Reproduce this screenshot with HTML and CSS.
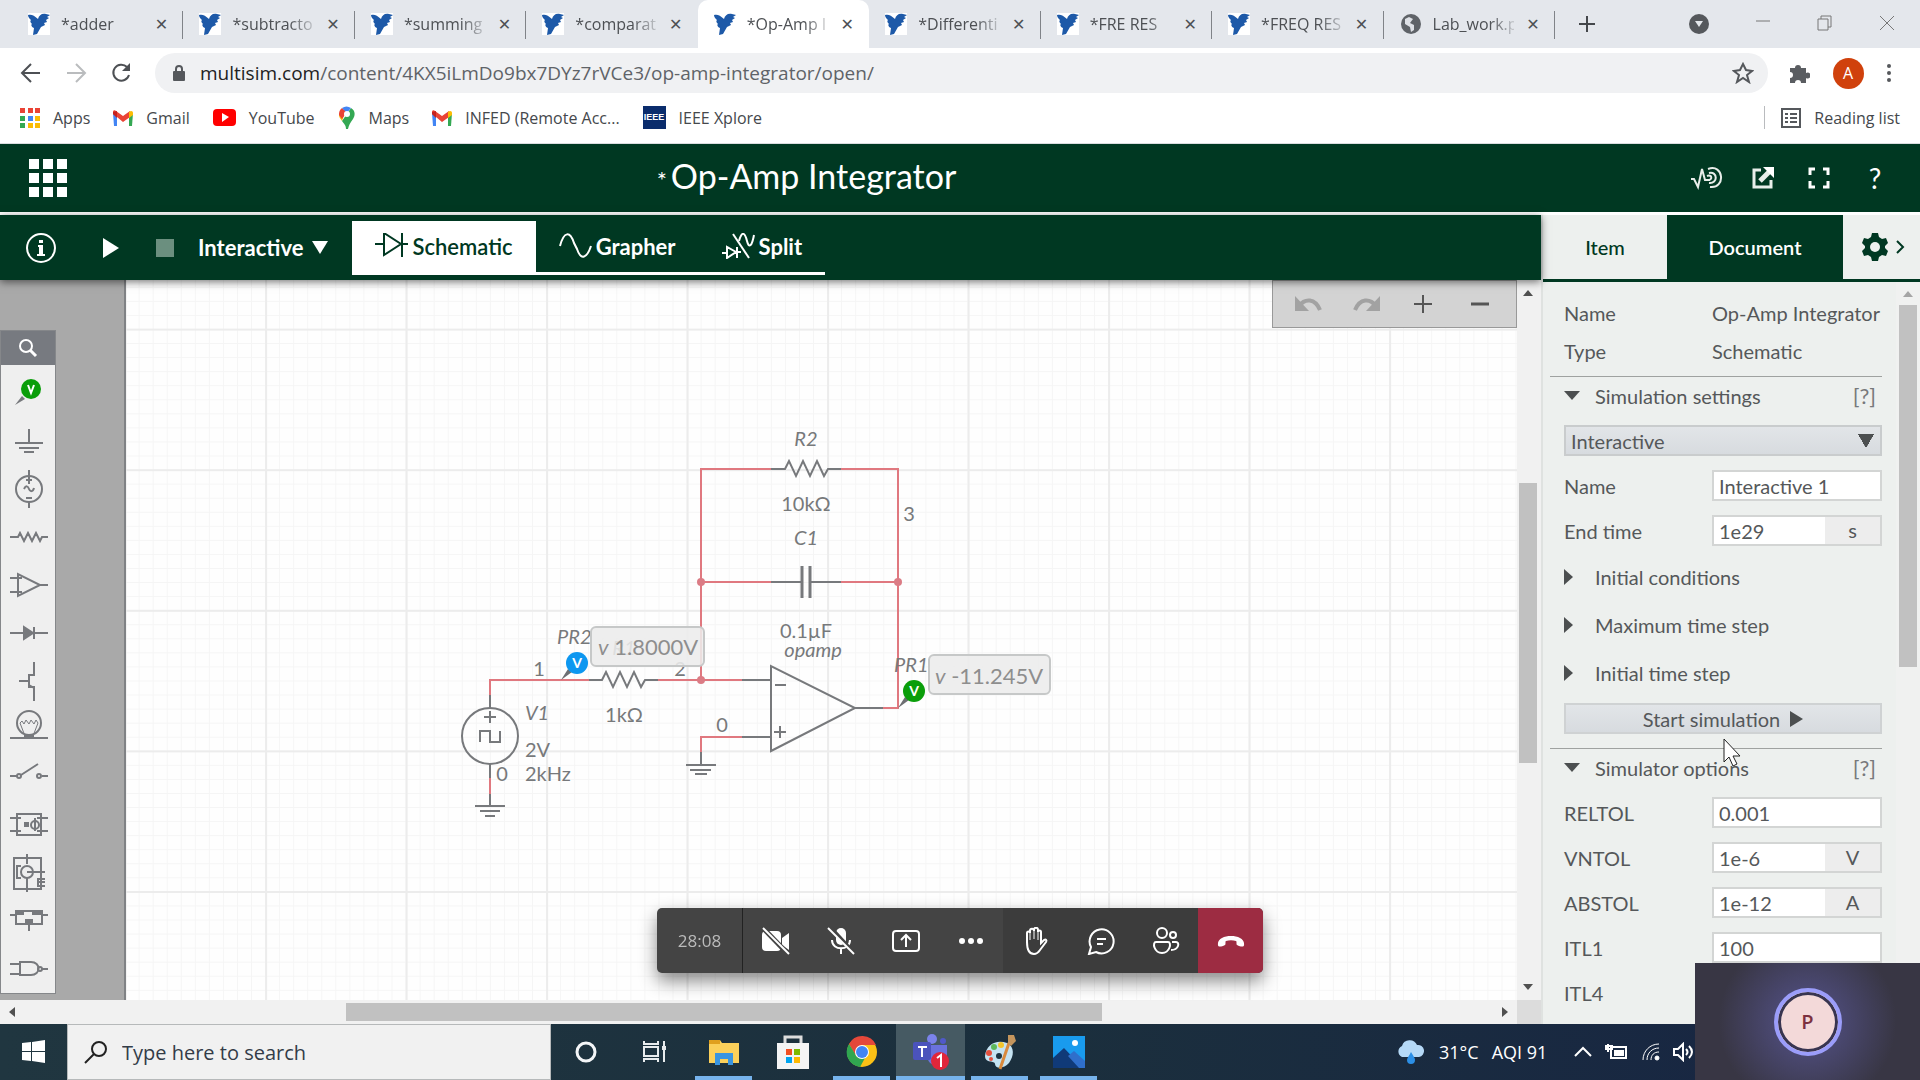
FILE: index.html
```html
<!DOCTYPE html>
<html lang="en">
<head>
<meta charset="utf-8">
<title>Op-Amp Integrator</title>
<link rel="stylesheet" href="styles.css">
</head>
<body>
<svg class="defs" aria-hidden="true">
  <symbol id="bird" viewBox="0 0 22 22"><path fill="#fff" d="M0 0h22v22H0z"/><path fill="#1d59a8" d="M0 2c3-1 6 0 10 4 1-4 4-6 8-5l4 1-3 2 2 1-3 2 1 2-3 1 1 2-4 2-4 7-4 1 1-7C3 14 3 11 4 11 2 9 2 8 3 7 1 5 0 4 0 2z"/></symbol>
  <symbol id="mail" viewBox="0 0 20 16"><path fill="#4285f4" d="M0 3h4v13H1z"/><path fill="#34a853" d="M16 3h4l-1 13h-3z"/><path fill="#ea4335" d="M0 4V2c0-2 2-2 3-1l7 5 7-5v6l-7 5-6-5z"/><path fill="#fbbc04" d="M16 2c2-2 4-1 4 1v2l-4 3z"/><path fill="#c5221f" d="M0 4V2l4-1v7z"/></symbol>
</svg>

<header class="browser">
  <div class="tabstrip">
    <div class="tabs">
      <div class="tab"><svg class="fav"><use href="#bird"/></svg><span class="tab-title">*adder</span><button class="x" aria-label="Close">✕</button></div>
      <div class="tab"><svg class="fav"><use href="#bird"/></svg><span class="tab-title">*subtracto</span><button class="x" aria-label="Close">✕</button></div>
      <div class="tab"><svg class="fav"><use href="#bird"/></svg><span class="tab-title">*summing</span><button class="x" aria-label="Close">✕</button></div>
      <div class="tab no-line"><svg class="fav"><use href="#bird"/></svg><span class="tab-title">*comparat</span><button class="x" aria-label="Close">✕</button></div>
      <div class="tab active"><svg class="fav"><use href="#bird"/></svg><span class="tab-title">*Op-Amp I</span><button class="x" aria-label="Close">✕</button></div>
      <div class="tab"><svg class="fav"><use href="#bird"/></svg><span class="tab-title">*Differenti</span><button class="x" aria-label="Close">✕</button></div>
      <div class="tab"><svg class="fav"><use href="#bird"/></svg><span class="tab-title">*FRE RES</span><button class="x" aria-label="Close">✕</button></div>
      <div class="tab"><svg class="fav"><use href="#bird"/></svg><span class="tab-title">*FREQ RES</span><button class="x" aria-label="Close">✕</button></div>
      <div class="tab"><svg class="fav" viewBox="0 0 22 22"><circle cx="11" cy="11" r="10" fill="#5f6368"/><path d="M5 6l4-2 4 2-3 4 4 2v5l-3 2-1-5-5-3z" fill="#dee1e6"/></svg><span class="tab-title">Lab_work.p</span><button class="x" aria-label="Close">✕</button></div>
    </div>
    <button class="newtab" aria-label="New tab"><svg width="18" height="18"><path d="M9 1v16M1 9h16" stroke="#44474b" stroke-width="2"/></svg></button>
    <div class="wincontrols">
      <button aria-label="Search tabs"><svg width="22" height="22"><circle cx="11" cy="11" r="10" fill="#55585c"/><path d="M7 8h8l-4 6z" fill="#e4e7eb"/></svg></button>
      <button aria-label="Minimize"><svg width="18" height="18"><path d="M2 6h14" stroke="#777" stroke-width="1"/></svg></button>
      <button aria-label="Restore"><svg width="18" height="18"><path d="M2 4h10v11H2zM5 4V1h10v11h-3" fill="none" stroke="#777"/></svg></button>
      <button aria-label="Close window"><svg width="18" height="18"><path d="M2 1l14 14M16 1L2 15" stroke="#777"/></svg></button>
    </div>
  </div>
  <div class="navbar">
    <button class="nav" aria-label="Back"><svg width="22" height="22" fill="none" stroke="#4d5054" stroke-width="2"><path d="M20 11H3M11 2l-9 9 9 9"/></svg></button>
    <button class="nav" aria-label="Forward"><svg width="22" height="22" fill="none" stroke="#babcbe" stroke-width="2"><path d="M2 11h17M11 2l9 9-9 9"/></svg></button>
    <button class="nav" aria-label="Reload"><svg width="22" height="22" fill="none" stroke="#4d5054" stroke-width="2"><path d="M19 13a8 8 0 1 1-2-8"/><path d="M20 1v8h-8z" fill="#4d5054" stroke="none"/></svg></button>
    <label class="address">
      <svg width="14" height="18"><path d="M4 8V5a3 3 0 0 1 6 0v3" fill="none" stroke="#55585c" stroke-width="2"/><rect x="1" y="7" width="12" height="10" rx="1" fill="#55585c"/></svg>
      <span class="url"><b>multisim.com</b>/content/4KX5iLmDo9bx7DYz7rVCe3/op-amp-integrator/open/</span>
      <svg width="22" height="22"><path d="M11 2l3 6 6 1-5 4 2 7-6-4-6 4 2-7-5-4 6-1z" fill="none" stroke="#55585c" stroke-width="2"/></svg>
    </label>
    <div class="nav-right">
      <button aria-label="Extensions"><svg width="22" height="22"><path d="M2 6h5a3 3 0 1 1 6 0h5v5a3 3 0 1 1 0 5v5h-5a3 3 0 0 0-6 0H2v-5a3 3 0 0 0 0-6z" fill="#5a5d61"/></svg></button>
      <button class="profile">A</button>
      <button aria-label="Menu"><svg width="6" height="20" fill="#55585c"><circle cx="3" cy="3" r="2"/><circle cx="3" cy="10" r="2"/><circle cx="3" cy="17" r="2"/></svg></button>
    </div>
  </div>
  <nav class="bookmarks">
    <a href="#"><svg width="20" height="20"><path fill="#ea4335" d="M0 0h5v5H0zM8 0h5v5H8zM15 0h5v5h-5z"/><path fill="#34a853" d="M0 8h5v5H0zM0 15h5v5H0z"/><path fill="#4285f4" d="M8 8h5v5H8z"/><path fill="#fbbc04" d="M15 8h5v5h-5zM8 15h5v5H8zM15 15h5v5h-5z"/></svg>Apps</a>
    <a href="#"><svg width="20" height="16"><use href="#mail"/></svg>Gmail</a>
    <a href="#"><svg width="23" height="18"><rect width="23" height="17" rx="4" fill="#f00"/><path d="M9 4l7 4-7 5z" fill="#fff"/></svg>YouTube</a>
    <a href="#"><svg width="18" height="24"><path d="M1 9l3-4 2 4-2 6C2 12 1 11 1 9z" fill="#fbbc04"/><path d="M13 2c5 3 4 8 2 11-3 4-4 6-5 10H8c0-4-2-5-4-8z" fill="#34a853"/><path d="M1 9a8 8 0 0 1 3-7l5 4-5 7z" fill="#ea4335"/><path d="M4 2a8 8 0 0 1 9 0L9 7z" fill="#4285f4"/><circle cx="9" cy="8" r="3" fill="#fff"/></svg>Maps</a>
    <a href="#"><svg width="20" height="16"><use href="#mail"/></svg>INFED (Remote Acc...</a>
    <a href="#"><span class="ieee">IEEE</span>IEEE Xplore</a>
    <a href="#" class="reading"><svg width="20" height="20" fill="none" stroke="#55585c" stroke-width="2"><path d="M1 1h18v18H1zM4 6h3M9 6h7M4 10h3M9 10h7M4 14h3M9 14h7"/></svg>Reading list</a>
  </nav>
</header>

<div class="app-header">
  <button class="waffle" aria-label="Apps"><svg width="38" height="38" fill="#fff"><path d="M0 0h10v10H0zM14 0h10v10H14zM28 0h10v10H28zM0 14h10v10H0zM14 14h10v10H14zM28 14h10v10H28zM0 28h10v10H0zM14 28h10v10H14zM28 28h10v10H28z"/></svg></button>
  <h1><span class="star">*</span>Op-Amp Integrator</h1>
  <div class="app-actions">
    <button aria-label="Formula"><svg width="32" height="24" fill="none" stroke="#e8eeea" stroke-width="2"><path d="M0 13h3l4 8 4-18 3 11h5"/><path d="M17 3c16-6 18 20 2 18"/><path d="M18 7c9-2 9 11 0 10M16 10c5-2 6 4 1 4"/></svg></button>
    <button aria-label="Share"><svg width="24" height="24" fill="none" stroke="#e8eeea" stroke-width="3"><path d="M10 4H3v17h17v-7"/><path d="M9 15L19 5" stroke-width="5"/><path d="M12 1h11v11z" fill="#fff" stroke="none"/></svg></button>
    <button aria-label="Full screen"><svg width="22" height="22" fill="none" stroke="#fff" stroke-width="3"><path d="M2 8V2h5M15 2h5v6M20 14v6h-5M7 20H2v-6"/></svg></button>
    <button class="help" aria-label="Help">?</button>
  </div>
</div>

<main class="app">
  <section class="left">
    <div class="toolbar">
      <button class="t-icon info" aria-label="Info"><svg width="32" height="32"><circle cx="16" cy="16" r="14" fill="none" stroke="#fff" stroke-width="2"/><path d="M14 8h4v3h-4zM13 13h5v9h2v2h-8v-2h2v-7h-1z" fill="#fff"/></svg></button>
      <button class="t-icon play" aria-label="Run"><svg width="16" height="20"><path d="M0 0l16 10L0 20z" fill="#fff"/></svg></button>
      <button class="t-icon stop" aria-label="Stop"><svg width="18" height="18"><path d="M0 0h18v18H0z" fill="#6b8f7f"/></svg></button>
      <button class="mode">Interactive<svg width="16" height="13"><path d="M0 0h16L8 13z" fill="#fff"/></svg></button>
      <div class="views">
        <button class="view on"><svg width="34" height="26" fill="none" stroke="#003822" stroke-width="2"><path d="M0 11h9M9 0v22l17-11zM27 0v24M27 11h6"/></svg>Schematic</button>
        <button class="view"><svg width="34" height="26" fill="none" stroke="#fff" stroke-width="2"><path d="M1 13C5-2 11-2 15 10l3 6c4 12 10 9 14-3"/></svg>Grapher</button>
        <button class="view"><svg width="34" height="26" fill="none" stroke="#fff" stroke-width="2"><path d="M11 1l16 24"/><path d="M0 20h5M5 14v11l9-6zM15 14v11M15 19h4M17 8c3-11 6-8 8 0s5 5 7-6" /></svg>Split</button>
      </div>
    </div>

    <div class="workspace">
      <div class="stage">
        <svg class="canvas">
          <defs>
            <pattern id="minor" x="124.6" y="330" width="14.05" height="14.06" patternUnits="userSpaceOnUse"><path d="M0 0.5H15M0.5 0V15" stroke="#f5f5f5" fill="none"/></pattern>
            <pattern id="major" x="124.6" y="329.6" width="140.5" height="140.6" patternUnits="userSpaceOnUse"><path d="M0 1H141M1 0V141" stroke="#ececec" stroke-width="2" fill="none"/></pattern>
          </defs>
          <rect width="100%" height="100%" fill="#fefefe"/>
          <g transform="translate(0 -281)">
            <rect width="100%" height="2000" fill="url(#minor)"/>
            <rect width="100%" height="2000" fill="url(#major)"/>
            <rect y="281" width="125" height="2000" fill="#a9a9a9"/>
            <rect x="124" y="281" width="2" height="2000" fill="#808285"/>
            <g class="wire">
              <path d="M771 470H701V681M841 470H898V709H883M701 583H771M841 583H898M490 696V681H589M658 681H742M742 738H701V753M490 779V795"/>
              <circle cx="701" cy="583" r="4"/><circle cx="701" cy="681" r="4"/><circle cx="898" cy="583" r="4"/>
            </g>
            <g class="part">
              <path d="M771 470H785l4-8 7 15 7-15 7 15 7-15 7 15 4-7H841"/>
              <path d="M771 583H802M811 583H841"/><path d="M802 567V599M810 567V599" stroke-width="3"/>
              <path d="M589 681H602l4-8 7 15 7-15 7 15 7-15 7 15 4-7H658"/>
              <path d="M771 667V752L855 709zM742 681H771M742 738H771M855 709H883M775 686H786M774 733H786M780 727V739"/>
              <path d="M701 753V766M686 766H716M690 771H711M695 775H707"/>
              <circle cx="490" cy="737" r="28"/>
              <path d="M490 696V709M490 765V779M484 718H496M490 712V724M480 743V732H490V743H500V732"/>
              <path d="M490 795V807M475 807H505M480 812H500M485 817H495"/>
            </g>
            <g class="lbl">
              <text class="it mid" x="806" y="447">R2</text>
              <text class="mid" x="806" y="512">10kΩ</text>
              <text class="mid" x="909" y="522">3</text>
              <text class="it mid" x="806" y="546">C1</text>
              <text class="mid" x="806" y="639">0.1µF</text>
              <text class="it mid" x="813" y="658">opamp</text>
              <text class="mid" x="539" y="677">1</text>
              <text class="mid" x="680" y="677">2</text>
              <text class="mid" x="502" y="782">0</text>
              <text class="mid" x="722" y="733">0</text>
              <text class="it" x="525" y="721">V1</text>
              <text x="525" y="758">2V</text>
              <text x="525" y="782">2kHz</text>
              <text class="mid" x="624" y="723">1kΩ</text>
              <text class="it" x="557" y="645">PR2</text>
              <text class="it mid" x="624" y="656">R1</text>
              <text class="it" x="894" y="673">PR1</text>
            </g>
            <g class="readout">
              <rect x="591" y="628" width="113" height="39" rx="5"/>
              <text x="598" y="656"><tspan font-style="italic">v</tspan> 1.8000V</text>
              <rect x="929" y="656" width="121" height="39" rx="5"/>
              <text x="935" y="685"><tspan font-style="italic">v</tspan> -11.245V</text>
            </g>
            <g class="probe">
              <path d="M561 681l7-11 4 3z"/><circle cx="577" cy="664" r="11" fill="#0d97f0"/><text x="577" y="669">V</text>
              <path d="M898 709l7-11 4 3z"/><circle cx="914" cy="692" r="11" fill="#0a9e0a"/><text x="914" y="697">V</text>
            </g>
          </g>
        </svg>
        <div class="palette">
          <button class="p-search" aria-label="Search"><svg width="20" height="20" fill="none" stroke="#fff"><circle cx="8" cy="8" r="6" stroke-width="2"/><path d="M12 12l6 6" stroke-width="3"/></svg></button>
          <button aria-label="Probe"><svg width="54" height="48"><path d="M14 36l7-9 3 3z" fill="#77797d" stroke="none"/><circle cx="30" cy="20" r="10" fill="#0a9e0a" stroke="none"/><path d="M27 16l3 8 3-8" stroke="#fff"/></svg></button>
          <button aria-label="Ground"><svg width="54" height="48"><path d="M28 12v14M14 26h28M18 31h20M23 35h10"/></svg></button>
          <button aria-label="Source"><svg width="54" height="48"><circle cx="28" cy="24" r="13"/><path d="M28 5v14M28 37v6M25 15h6M25 33h6M23 24c2-4 4-3 5 0s4 3 5-1"/></svg></button>
          <button aria-label="Resistor"><svg width="54" height="48"><path d="M9 24h8l2-4 4 8 4-8 4 8 4-8 4 8 2-4h6"/></svg></button>
          <button aria-label="Op-amp"><svg width="54" height="48"><path d="M17 13v22l22-11zM9 17h12M9 31h12M39 24h8"/></svg></button>
          <button aria-label="Diode"><svg width="54" height="48"><path d="M9 24h38M33 18v12"/><path d="M23 18v12l9-6z" fill="#77797d"/></svg></button>
          <button aria-label="Transistor"><svg width="54" height="48"><path d="M33 5v13h-5v12h5v14M18 24h10M28 28l5 3"/></svg></button>
          <button aria-label="Lamp"><svg width="54" height="48"><circle cx="28" cy="18" r="12"/><path d="M9 33h38M24 31L19 18l2-2 2 3 2-4 3 4 2-4 3 4 2-4 2 3-5 13" stroke-width="1"/><path d="M9 33h38"/><path d="M24 30h8v3h-8z" fill="#77797d"/></svg></button>
          <button aria-label="Switch"><svg width="54" height="48"><path d="M9 23h7M20 22l17-11M41 23h6"/><circle cx="18" cy="23" r="2"/><circle cx="38" cy="23" r="2"/></svg></button>
          <button aria-label="Two-port"><svg width="54" height="48"><path d="M16 13h24v21H16zM9 17h11M9 30h11M36 17h11M36 30h11M34 17v13"/><circle cx="34" cy="24" r="4"/><path d="M24 22h3v3h-3z" fill="#77797d"/></svg></button>
          <button aria-label="Machine"><svg width="54" height="48"><path d="M13 9h27v31H13zM26 5v10M26 29v14M26 23h18M20 17h-4v12h4"/><circle cx="26" cy="23" r="6"/><path d="M36 30h8M36 33h8M36 37h8M37 30v7"/></svg></button>
          <button aria-label="Connector"><svg width="54" height="48"><path d="M15 14h26v13H15zM9 18h6M41 18h6M28 27v7"/><path d="M17 15h5v2h-5zM32 15h7v2h-7zM25 23h6v2h-6z" fill="#77797d"/></svg></button>
          <button aria-label="Logic gate"><svg width="54" height="48"><path d="M19 17h11c10 0 10 13 0 13H19zM9 19h10M9 29h10M41 24h6"/><circle cx="39" cy="24" r="2"/></svg></button>
        </div>
        <div class="zoomtools">
          <button aria-label="Undo"><svg width="30" height="20"><path d="M5 12c6-8 16-8 21 4" fill="none" stroke="#a2a2a2" stroke-width="4"/><path d="M1 2v15h14z" fill="#a2a2a2"/></svg></button>
          <button aria-label="Redo"><svg width="30" height="20"><path d="M25 12C19 4 9 4 4 16" fill="none" stroke="#a2a2a2" stroke-width="4"/><path d="M29 2v15H15z" fill="#a2a2a2"/></svg></button>
          <button aria-label="Zoom in"><svg width="20" height="20"><path d="M10 1v18M1 10h18" stroke="#555" stroke-width="2"/></svg></button>
          <button aria-label="Zoom out"><svg width="20" height="20"><path d="M1 10h18" stroke="#555" stroke-width="3"/></svg></button>
        </div>
      </div>
      <div class="vbar"><i class="up"></i><i class="vthumb"></i><i class="down"></i></div>
      <div class="hbar"><i class="lft"></i><i class="hthumb"></i><i class="rgt"></i></div>
      <div class="corner"></div>
    </div>
  </section>

  <aside class="panel">
    <div class="panel-tabs">
      <button class="item">Item</button>
      <button class="doc">Document</button>
      <button class="gear" aria-label="Settings"><svg width="26" height="28"><path d="M10 0h6l1 4 3 2 4-1 2 5-3 3v2l3 3-2 5-4-1-3 2-1 4h-6l-1-4-3-2-4 1-2-5 3-3v-2L0 10l2-5 4 1 3-2z" fill="#003822"/><circle cx="13" cy="14" r="5" fill="#edf0ee"/></svg><svg width="10" height="16"><path d="M1 2l6 6-6 6" fill="none" stroke="#003822" stroke-width="2"/></svg></button>
    </div>
    <div class="panel-scroll">
      <form class="form">
        <div class="row text"><span>Name</span><span>Op-Amp Integrator</span></div>
        <div class="row text"><span>Type</span><span>Schematic</span></div>
        <section class="group">
          <h2><i class="open"></i>Simulation settings<a href="#">[?]</a></h2>
          <div class="row full"><select aria-label="Simulation type"><option>Interactive</option></select></div>
          <div class="row"><label for="nm">Name</label><span class="field"><input id="nm" value="Interactive 1"></span></div>
          <div class="row"><label for="et">End time</label><span class="field"><input id="et" value="1e29"><em>s</em></span></div>
          <h3><i class="closed"></i>Initial conditions</h3>
          <h3><i class="closed"></i>Maximum time step</h3>
          <h3><i class="closed"></i>Initial time step</h3>
          <div class="row full"><button type="button" class="start">Start simulation<i class="closed"></i></button></div>
        </section>
        <section class="group">
          <h2><i class="open"></i>Simulator options<a href="#">[?]</a></h2>
          <div class="row"><label for="rt">RELTOL</label><span class="field"><input id="rt" value="0.001"></span></div>
          <div class="row"><label for="vt">VNTOL</label><span class="field"><input id="vt" value="1e-6"><em>V</em></span></div>
          <div class="row"><label for="at">ABSTOL</label><span class="field"><input id="at" value="1e-12"><em>A</em></span></div>
          <div class="row"><label for="i1">ITL1</label><span class="field"><input id="i1" value="100"></span></div>
          <div class="row"><span>ITL4</span></div>
        </section>
      </form>
      <div class="pbar"><i class="up"></i><i class="pthumb"></i></div>
    </div>
  </aside>
</main>

<footer class="taskbar">
  <button class="winstart" aria-label="Start"><svg width="24" height="24" fill="#fff"><path d="M0 3l9-1v9H0zM10 2l13-2v11H10zM0 12h9v9l-9-1zM10 12h13v11l-13-2z"/></svg></button>
  <label class="tsearch"><svg width="24" height="24" fill="none" stroke="#222" stroke-width="2"><circle cx="15" cy="9" r="7"/><path d="M10 14L1 23"/></svg><input type="text" placeholder="Type here to search" aria-label="Search"></label>
  <div class="apps">
    <button aria-label="Cortana"><svg width="24" height="24"><circle cx="12" cy="12" r="9" fill="none" stroke="#f4f6f8" stroke-width="3"/></svg></button>
    <button aria-label="Task view"><svg width="26" height="24" fill="none" stroke="#e8ecee" stroke-width="2"><path d="M2 7h14v9H2zM2 1v3h14V1M2 22v-3h14v3M22 1v21"/><path d="M20 6h4v4h-4z" fill="#e8ecee" stroke="none"/></svg></button>
    <button class="run" aria-label="File Explorer"><svg width="32" height="34"><path d="M1 5h11l2 3h17v20H1z" fill="#fbd05a"/><path d="M1 5h11v4H1z" fill="#e0a01e"/><path d="M7 18h18v12h-5v-6h-8v6H7z" fill="#3a95e0"/></svg></button>
    <button aria-label="Store"><svg width="34" height="36"><path d="M9 12V3h16v9" fill="none" stroke="#ddd" stroke-width="3"/><path d="M1 9h32v26H1z" fill="#f4f4f4"/><path fill="#f25022" d="M10 15h6v6h-6z"/><path fill="#7fba00" d="M18 15h6v6h-6z"/><path fill="#00a4ef" d="M10 23h6v6h-6z"/><path fill="#ffb900" d="M18 23h6v6h-6z"/></svg></button>
    <button class="run" aria-label="Chrome"><svg width="32" height="32"><circle cx="16" cy="16" r="15" fill="#fbc116"/><path d="M3 8A15 15 0 0 1 30 9H16l-6 11z" fill="#e5483a"/><path d="M3 8l8 13 8 1-5 9A15 15 0 0 1 3 8z" fill="#30a650"/><circle cx="16" cy="16" r="7" fill="#fff"/><circle cx="16" cy="16" r="6" fill="#4285f4"/></svg></button>
    <button class="run current" aria-label="Teams"><svg width="36" height="38"><circle cx="19" cy="6" r="5" fill="#7b83eb"/><circle cx="30" cy="8" r="3" fill="#5059c9"/><path d="M14 12h20v10c0 14-20 14-20 0z" fill="#6a72dc"/><rect y="9" width="18" height="18" rx="2" fill="#4b53bc"/><path d="M5 14h9M9 14v10" stroke="#fff" stroke-width="2"/><circle cx="27" cy="28" r="9" fill="#e0263a"/><path d="M24 25l4-3v12" fill="none" stroke="#fff" stroke-width="2"/></svg></button>
    <button class="run" aria-label="Paint"><svg width="34" height="36"><path d="M2 22C3 10 14 5 24 9c8 4 7 13 2 20-5 6-14 6-14 1 0-4-10 0-10-8z" fill="#c5e3f2"/><circle cx="6" cy="19" r="3" fill="#e5503e"/><circle cx="11" cy="13" r="3" fill="#5db85c"/><circle cx="18" cy="11" r="3" fill="#f3c52c"/><circle cx="8" cy="25" r="2" fill="#e5503e"/><circle cx="16" cy="22" r="3" fill="#1d3442"/><path d="M26 9L17 35" stroke="#d98a3d" stroke-width="3"/><path d="M25 1h6l2 6-5 5-3-3z" fill="#c4955d"/></svg></button>
    <button class="run" aria-label="Photos"><svg width="32" height="32"><path d="M0 0h32v32H0z" fill="#199bee"/><path d="M0 22l11-10 19 20H0z" fill="#103a78"/><path d="M15 20l6-5 11 10v7H26z" fill="#2f6fcb"/><circle cx="22" cy="7" r="3" fill="#fff"/></svg></button>
  </div>
  <div class="tray">
    <svg width="30" height="26"><path d="M6 18a6 6 0 0 1 0-11 8 8 0 0 1 15-1 6 6 0 0 1 2 12z" fill="#b5d9f7"/><path d="M15 13c3 5 4 6 4 8a4 4 0 0 1-8 0c0-2 2-4 4-8z" fill="#2c8fe6"/></svg>
    <span class="temp">31°C</span><span class="aqi">AQI 91</span>
    <svg width="18" height="12"><path d="M1 10l8-8 8 8" fill="none" stroke="#fff" stroke-width="2"/></svg>
    <svg width="24" height="18" fill="none" stroke="#fff" stroke-width="2"><path d="M6 4h15v11H6zM3 1v8M1 3h6v3H1z"/><path d="M9 7h10v6H9z" fill="#fff" stroke="none"/></svg>
    <svg width="18" height="18" fill="none" stroke="#fff" stroke-width="1"><path d="M1 17C1 8 8 1 17 1M5 17C5 10 10 5 17 5M9 17c0-5 3-8 8-8"/><circle cx="15" cy="15" r="2" fill="#fff"/></svg>
    <svg width="20" height="20" fill="none" stroke="#fff" stroke-width="2"><path d="M1 7h4l5-5v16l-5-5H1zM13 7c2 2 2 4 0 6M16 4c4 4 4 8 0 12"/></svg>
  </div>
</footer>

<div class="meeting">
  <span class="timer">28:08</span>
  <button aria-label="Camera off"><svg width="28" height="28"><rect y="4" width="19" height="20" rx="4" fill="#fff"/><path d="M20 11l7-5v17l-7-5z" fill="#fff"/><path d="M0 0l27 28" stroke="#444" stroke-width="5"/><path d="M1 1l26 26" stroke="#fff" stroke-width="2"/></svg></button>
  <button aria-label="Muted"><svg width="28" height="28"><rect x="9" y="1" width="10" height="17" rx="5" fill="#fff"/><path d="M5 13c0 11 18 11 18 0M14 21v6" fill="none" stroke="#fff" stroke-width="2"/><path d="M3 0l24 26" stroke="#444" stroke-width="4"/><path d="M1 1l26 26" stroke="#fff" stroke-width="2"/></svg></button>
  <button aria-label="Share"><svg width="28" height="28" fill="none" stroke="#fff" stroke-width="2"><rect x="1" y="4" width="26" height="20" rx="3"/><path d="M14 20V9M9 13l5-5 5 5"/></svg></button>
  <button aria-label="More"><svg width="28" height="28" fill="#fff"><circle cx="5" cy="14" r="3"/><circle cx="14" cy="14" r="3"/><circle cx="23" cy="14" r="3"/></svg></button>
  <button class="dark" aria-label="Raise hand"><svg width="28" height="28" fill="none" stroke="#fff" stroke-width="2"><path d="M5 15V6c0-2 3-2 3 0V4c0-3 4-3 4 0V3c0-3 4-3 4 0v2c0-2 3-2 3 0v11l3-3c2-1 3 0 2 2l-6 8c-2 3-3 4-6 4-5 0-7-4-7-12z"/><path d="M8 6v7M12 4v8M16 5v8" stroke-width="1"/></svg></button>
  <button class="dark" aria-label="Chat"><svg width="28" height="28" fill="none" stroke="#fff" stroke-width="2"><path d="M4 20A12 12 0 1 1 9 25l-7 2z"/><path d="M10 12h9M10 17h6"/></svg></button>
  <button class="dark" aria-label="People"><svg width="28" height="28" fill="none" stroke="#fff" stroke-width="2"><circle cx="10" cy="6" r="5"/><circle cx="21" cy="8" r="3"/><path d="M4 15h12c4 0 2 11-6 11S0 15 4 15zM20 15h4c4 0 3 8-5 8"/></svg></button>
  <button class="hang" aria-label="Leave"><svg width="28" height="28"><path d="M1 18C-1 6 29 6 27 18c0 2-3 2-7 0-1-1 0-4-1-4-3-1-7-1-10 0-1 0 0 3-1 4-4 2-7 2-7 0z" fill="#fff"/></svg></button>
</div>

<div class="pip"><span>P</span></div>

<svg class="pointer" width="20" height="30"><path d="M1 1v23l5-5 4 9 4-2-4-8h7z" fill="#fff" stroke="#222"/></svg>
</body>
</html>
```
FILE: styles.css
```css
* { box-sizing: border-box; }
body {
  margin: 0;
  min-height: 100vh;
  display: flex;
  flex-direction: column;
  font-family: Lato, "Liberation Sans", sans-serif;
  font-size: 20px;
  color: #55585a;
  background: #fff;
  overflow: hidden;
}
button { border: 0; padding: 0; margin: 0; background: none; font: inherit; color: inherit; display: flex; align-items: center; justify-content: center; }
svg { flex: none; display: block; }
i { display: block; flex: none; }
.defs { position: absolute; width: 0; height: 0; }

/* Browser chrome */
.browser { font-family: "Open Sans", "Noto Sans", sans-serif; font-size: 16px; color: #4d5054; }
.tabstrip { height: 48px; background: #e4e7ec; display: flex; align-items: center; padding-left: 12px; }
.tabs { display: grid; grid-template-columns: repeat(9, 1fr); width: 1543px; height: 48px; }
.tab { display: flex; align-items: center; gap: 11px; padding: 0 14px 0 16px; position: relative; min-width: 0; }
.tab::after { content: ""; position: absolute; right: 0; top: 11px; height: 28px; width: 1px; background: #808388; }
.tab.active { background: #fff; border-radius: 10px 10px 0 0; }
.tab.active::after, .tab.no-line::after { display: none; }
.fav { width: 22px; height: 22px; }
.tab-title { flex: 1; overflow: hidden; white-space: nowrap; -webkit-mask-image: linear-gradient(90deg, #000 70%, #0003); mask-image: linear-gradient(90deg, #000 70%, #0003); }
.x { width: 16px; font-size: 16px; font-family: "DejaVu Sans", sans-serif; }
.newtab { width: 64px; height: 48px; }
.wincontrols { margin-left: auto; display: flex; gap: 44px; padding-right: 24px; align-items: center; }
.navbar { height: 50px; display: flex; align-items: center; padding: 0 20px; }
.nav { width: 22px; margin-right: 23px; }
.address { flex: 1; height: 40px; border-radius: 20px; background: #f0f1f3; display: flex; align-items: center; padding: 0 14px 0 17px; gap: 14px; }
.url { flex: 1; font-size: 19px; color: #5f6368; white-space: nowrap; overflow: hidden; }
.url b { font-weight: 400; color: #222; }
.nav-right { width: 132px; display: flex; align-items: center; justify-content: space-between; padding: 0 8px 0 20px; }
.profile { width: 31px; height: 31px; border-radius: 50%; background: #d0410c; color: #fff; font-size: 16px; }
.bookmarks { height: 46px; display: flex; align-items: center; gap: 23px; padding: 0 20px 6px; border-bottom: 1px solid #dadce0; }
.bookmarks a { display: flex; align-items: center; gap: 13px; color: #45484c; text-decoration: none; white-space: nowrap; }
.ieee { width: 23px; height: 23px; background: #0a2c6c; color: #fff; font: 700 9px/23px "Liberation Sans", sans-serif; text-align: center; }
.bookmarks .reading { margin-left: auto; border-left: 1px solid #b9bbbe; padding-left: 16px; height: 23px; }

/* Application header */
.app-header { height: 71px; background: #003822; border-bottom: 3px solid #fff; display: flex; align-items: center; color: #fff; }
.waffle { width: 67px; padding-left: 29px; justify-content: flex-start; }
h1 { flex: 1; margin: 0; font-size: 34px; line-height: 40px; font-weight: 400; text-align: center; }
.star { font-size: 24px; margin-right: 4px; }
.app-actions { width: 374px; display: flex; justify-content: flex-end; padding-right: 17px; }
.app-actions button { width: 56px; }
.help { font-size: 28px; }

.app { flex: 1; display: flex; min-height: 0; }
.left { flex: 1; display: flex; flex-direction: column; min-width: 0; }
.toolbar { height: 65px; background: #003822; color: #fff; display: flex; align-items: center; font-size: 22px; font-weight: 700; position: relative; box-shadow: 0 2px 8px #0008; z-index: 1; }
.info { width: 82px; }
.play { width: 58px; }
.stop { width: 50px; }
.mode { gap: 9px; padding: 0 24px 0 8px; font-weight: 700; }
.views { display: flex; height: 54px; }
.view { gap: 3px; padding: 0 23px; border-bottom: 3px solid #fff; }
.view.on { background: #fff; color: #003822; font-weight: 600; }

/* Schematic workspace */
.workspace { flex: 1; display: grid; grid-template-columns: 1fr 24px; grid-template-rows: 1fr 24px; min-height: 0; }
.stage { position: relative; min-height: 0; overflow: hidden; }
.canvas { position: absolute; width: 100%; height: 100%; }
.wire path { fill: none; stroke: #e0787f; stroke-width: 2; }
.wire circle { fill: #db7c85; }
.part { fill: none; stroke: #77797c; stroke-width: 2; }
.lbl { font-size: 20px; fill: #77797b; }
.it { font-style: italic; }
.mid { text-anchor: middle; }
.readout rect { fill: #ececec; fill-opacity: .88; stroke: #c6c8c8; stroke-width: 2; }
.readout text { font-size: 22px; fill: #8e8e8e; }
.probe path { fill: #6c6e72; }
.probe text { font-size: 14px; font-weight: 700; fill: #fff; text-anchor: middle; }
.palette { position: absolute; left: 0; top: 50px; bottom: 6px; width: 56px; border: 1px solid #85878a; background: #efefef; display: flex; flex-direction: column; }
.palette button { flex: 1; min-height: 0; }
.palette button svg { fill: none; stroke: #77797d; stroke-width: 2; }
.palette .p-search { flex: none; height: 34px; margin-bottom: 4px; background: #777a80; }
.palette .p-search svg { stroke: #fff; }
.zoomtools { position: absolute; right: 0; top: 0; width: 245px; height: 48px; background: #d3d3d3; border: 1px solid #999; display: grid; grid-template-columns: repeat(4, 1fr); padding: 0 8px; }
.vbar { background: #f1f1f1; padding: 10px 4px 10px 2px; display: flex; flex-direction: column; align-items: center; }
.up, .down { border: 5px solid transparent; border-top: 0; border-bottom: 6px solid #505050; }
.down { border-bottom: 0; border-top: 6px solid #505050; margin-top: auto; }
.vthumb { width: 18px; height: 280px; background: #c1c1c1; margin-top: 187px; }
.hbar { background: #f1f1f1; display: flex; align-items: center; padding: 0 9px; }
.lft, .rgt { border: 5px solid transparent; border-left: 0; border-right: 6px solid #505050; }
.rgt { border-right: 0; border-left: 6px solid #505050; margin-left: auto; }
.hthumb { width: 756px; height: 18px; background: #c1c1c1; margin-left: 331px; }
.corner { background: #dcdcdc; }

/* Document panel */
.panel { width: 379px; background: #edf0ee; border-left: 2px solid #dfe2e0; display: flex; flex-direction: column; }
.panel-tabs { height: 67px; border-bottom: 3px solid #003822; display: grid; grid-template-columns: 124px 176px 1fr; color: #003822; font-weight: 500; }
.doc { background: #003822; color: #fff; font-weight: 600; }
.gear { gap: 8px; padding-left: 4px; }
.panel-scroll { flex: 1; display: flex; min-height: 0; overflow: hidden; }
.form { flex: 1; min-width: 0; padding: 12px 14px 0 7px; }
.row { height: 45px; display: grid; grid-template-columns: 148px minmax(0, 1fr); align-items: center; padding-left: 14px; white-space: nowrap; }
.row.text { height: 38px; }
.row.full { grid-template-columns: minmax(0, 1fr); }
.group { border-top: 1px solid #9fa2a0; margin-top: 6px; }
h2, h3 { margin: 0; display: flex; align-items: center; font-size: 20px; font-weight: 400; padding-left: 14px; }
h2 { height: 41px; padding-bottom: 4px; }
h2 a { margin-left: auto; padding-right: 6px; color: #77797b; text-decoration: none; font-size: 22px; }
h3 { height: 48px; }
.open { border: 8px solid transparent; border-bottom: 0; border-top: 9px solid #4c4f50; margin-right: 15px; }
.closed { border: 8px solid transparent; border-right: 0; border-left: 9px solid #4c4f50; margin-right: 22px; }
.field { height: 31px; display: flex; border: 2px solid #d3d5d4; background: #fff; }
.field input { flex: 1; min-width: 0; border: 0; padding: 0 5px; background: #fff; font: inherit; color: inherit; outline: 0; }
.field em { width: 55px; background: #ededed; font-style: normal; text-align: center; line-height: 27px; }
select { height: 31px; width: 100%; border: 2px solid #c9cccd; border-radius: 0; padding: 0 5px; font: inherit; color: inherit; appearance: none; background: linear-gradient(to bottom right, #4c4f50 50%, transparent 51%) right 6px center / 8px 14px no-repeat, linear-gradient(to bottom left, #4c4f50 50%, transparent 51%) right 14px center / 8px 14px no-repeat, linear-gradient(#e2e5e8, #d7dbdf); }
.start { height: 31px; margin-bottom: 2px; border: 2px solid #cfd2d3; background: linear-gradient(#e2e5e8, #d7dbdf); }
.start .closed { margin: 0 0 0 10px; border-left-width: 13px; }
.pbar { width: 24px; background: #f0f1f0; padding: 9px 3px; display: flex; flex-direction: column; align-items: center; }
.pbar .up { border-bottom-color: #a5a5a5; }
.pthumb { width: 18px; height: 362px; background: #c1c1c1; margin-top: 8px; }

/* Windows taskbar */
.taskbar { height: 56px; background: linear-gradient(90deg, #203640, #1b2f3d 55%, #182742 90%); display: flex; color: #fff; font-family: "Open Sans", "Noto Sans", sans-serif; font-size: 18px; }
.winstart { width: 67px; }
.tsearch { width: 484px; background: #f1f1f1; border: 1px solid #b6b9ba; display: flex; align-items: center; gap: 14px; padding: 0 16px; }
.tsearch input { flex: 1; min-width: 0; border: 0; padding: 0; background: none; font: inherit; font-size: 20px; outline: 0; }
.tsearch input::placeholder { color: #333c48; opacity: 1; }
.apps { display: grid; grid-auto-flow: column; grid-auto-columns: 69px; }
.apps button { position: relative; }
.run::after { content: ""; position: absolute; left: 6px; right: 6px; bottom: 0; height: 4px; background: #76b3ec; }
.current { background: #465a63; }
.current::after { left: 0; right: 0; }
.tray { margin-left: auto; width: 524px; display: flex; align-items: center; gap: 13px; }
.aqi { margin-right: 14px; }

/* Floating meeting controls */
.meeting { position: fixed; left: 50%; bottom: 107px; transform: translateX(-50%); height: 65px; display: flex; border-radius: 5px; overflow: hidden; background: #444; box-shadow: 0 8px 18px #0007; }
.timer { width: 86px; line-height: 65px; text-align: center; color: #bbb; border-right: 1px solid #222; font-family: "Open Sans", "Noto Sans", sans-serif; font-size: 17px; }
.meeting button { width: 65px; }
.meeting .dark { background: #3c3c3c; }
.meeting .hang { background: #9d2c42; }
.pip { position: fixed; right: 0; bottom: 0; width: 225px; height: 117px; display: grid; place-items: center; background: radial-gradient(circle, #4d4b78 20%, #383644 70%); }
.pip span { width: 68px; height: 68px; border-radius: 50%; border: 4px solid #9b9dfa; background: #f3d9d9; box-shadow: inset 0 0 0 3px #383550; color: #7c3140; font: 600 20px/60px "Open Sans", sans-serif; text-align: center; }
.pointer { position: fixed; left: 1723px; top: 738px; }
```
